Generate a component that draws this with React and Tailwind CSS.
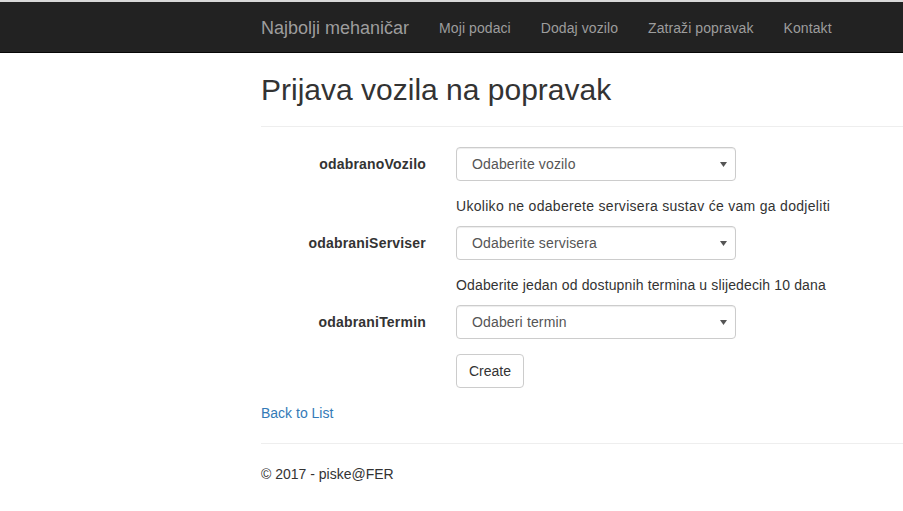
import React from "react";

function FakeSelect({ text }) {
  return (
    <div className="flex h-[34px] w-[280px] items-center justify-between rounded-[4px] border border-[#cccccc] bg-white pl-[15px] pr-[8px] text-[14px] tracking-[0.15px] text-[#555555] shadow-[inset_0_1px_1px_rgba(0,0,0,0.075)]">
      <span>{text}</span>
      <svg width="7" height="5" viewBox="0 0 7 5" className="mt-[1px]">
        <path d="M0 0 H7 L3.5 5 Z" fill="#555555" />
      </svg>
    </div>
  );
}

function Row({ label, children }) {
  return (
    <div className="flex">
      <div className="w-[195px] px-[15px] pt-[7px] text-right text-[14px] font-bold leading-[20px] tracking-[0.2px] text-[#333333]">
        {label}
      </div>
      <div className="px-[15px]">{children}</div>
    </div>
  );
}

export default function App() {
  return (
    <div
      className="min-h-[511px] bg-white text-[14px] leading-[20px] text-[#333333]"
      style={{ fontFamily: '"Liberation Sans", Arial, Helvetica, sans-serif' }}
    >
      <div className="h-[2px] bg-[#d9d9d9]" />
      <nav className="h-[51px] border-b border-[#080808] bg-[#222222]">
        <div className="flex pl-[246px]">
          <a className="h-[50px] px-[15px] pb-[14px] pt-[16px] text-[18px] leading-[20px] text-[#9d9d9d]">
            Najbolji mehaničar
          </a>
          {["Moji podaci", "Dodaj vozilo", "Zatraži popravak", "Kontakt"].map((t) => (
            <a key={t} className="px-[15px] pb-[14px] pt-[16px] text-[14px] leading-[20px] tracking-[0.08px] text-[#9d9d9d]">
              {t}
            </a>
          ))}
        </div>
      </nav>

      <div className="pl-[246px]">
        <div className="pl-[15px]">
          <h2 className="mb-[10px] mt-[20px] text-[30px] font-medium leading-[33px] text-[#333333]">
            Prijava vozila na popravak
          </h2>
          <div className="mt-[20px] border-t border-[#eeeeee]" />
        </div>

        <div className="mt-[20px]">
          <Row label="odabranoVozilo">
            <FakeSelect text="Odaberite vozilo" />
          </Row>
          <p className="mb-[10px] mt-[15px] pl-[210px] tracking-[0.3px]">
            Ukoliko ne odaberete servisera sustav će vam ga dodjeliti
          </p>
          <Row label="odabraniServiser">
            <FakeSelect text="Odaberite servisera" />
          </Row>
          <p className="mb-[10px] mt-[15px] pl-[210px] tracking-[0.14px]">
            Odaberite jedan od dostupnih termina u slijedecih 10 dana
          </p>
          <Row label="odabraniTermin">
            <FakeSelect text="Odaberi termin" />
          </Row>
          <div className="mt-[15px] pl-[210px]">
            <button className="h-[34px] rounded-[4px] border border-[#cccccc] bg-white px-[12px] text-[14px] leading-[20px] text-[#333333]">
              Create
            </button>
          </div>
        </div>

        <div className="mt-[15px] pl-[15px]">
          <a className="text-[#337ab7]">Back to List</a>
          <div className="mt-[20px] border-t border-[#eeeeee]" />
          <p className="mt-[20px]">© 2017 - piske@FER</p>
        </div>
      </div>
    </div>
  );
}
